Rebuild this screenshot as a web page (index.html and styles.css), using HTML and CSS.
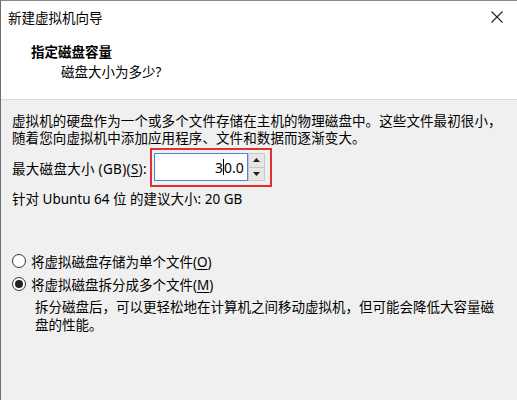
FILE: index.html
```html
<!DOCTYPE html>
<html lang="zh-CN">
<head>
<meta charset="utf-8">
<title>新建虚拟机向导</title>
<link rel="stylesheet" href="styles.css">
</head>
<body>
<div class="window">
  <div class="titlebar">
    <span class="title">新建虚拟机向导</span>
    <svg class="close" width="12" height="12" viewBox="0 0 12 12"><path d="M0.5 0.5 L11.5 11.5 M11.5 0.5 L0.5 11.5" stroke="#222" stroke-width="1.1" fill="none"/></svg>
  </div>
  <div class="header">
    <div class="heading">指定磁盘容量</div>
    <div class="subheading">磁盘大小为多少?</div>
  </div>
  <div class="content">
    <p class="para">虚拟机的硬盘作为一个或多个文件存储在主机的物理磁盘中。这些文件最初很小，<br>随着您向虚拟机中添加应用程序、文件和数据而逐渐变大。</p>
    <div class="size-row">
      <span class="label">最大磁盘大小 (GB)(<u>S</u>):</span>
      <div class="highlight">
        <div class="spin">
          <div class="spin-input"><span>3</span><span class="caret"></span><span>0.0</span></div>
          <div class="spin-btns">
            <div class="spin-btn"><svg width="7" height="4" viewBox="0 0 7 4"><path d="M0 4 L3.5 0 L7 4 Z" fill="#222"/></svg></div>
            <div class="spin-btn"><svg width="7" height="4" viewBox="0 0 7 4"><path d="M0 0 L3.5 4 L7 0 Z" fill="#222"/></svg></div>
          </div>
        </div>
      </div>
    </div>
    <p class="recommend">针对 Ubuntu 64 位 的建议大小: 20 GB</p>
    <div class="options">
      <label class="radio-row"><span class="radio"></span><span>将虚拟磁盘存储为单个文件(<u>O</u>)</span></label>
      <label class="radio-row"><span class="radio checked"></span><span>将虚拟磁盘拆分成多个文件(<u>M</u>)</span></label>
      <p class="desc">拆分磁盘后，可以更轻松地在计算机之间移动虚拟机，但可能会降低大容量磁<br>盘的性能。</p>
    </div>
  </div>
</div>
</body>
</html>
```
FILE: styles.css
```css
* { box-sizing: border-box; }
html, body {
  margin: 0;
  padding: 0;
  width: 517px;
  height: 400px;
  overflow: hidden;
  background: #f0f0f0;
  font-family: "Noto Sans", "Noto Sans CJK SC", sans-serif;
  font-size: 13.5px;
  color: #000;
}
.window {
  width: 517px;
  height: 400px;
  border-top: 1px solid #8a8a8a;
  border-left: 1px solid #6e6e6e;
  display: flex;
  flex-direction: column;
}
.titlebar {
  height: 32px;
  background: #fff;
  display: flex;
  align-items: center;
  justify-content: space-between;
  padding: 0 14px 0 7px;
}
.close { display: block; }
.header {
  background: #fff;
  height: 67px;
  padding: 9px 0 0 30px;
  border-bottom: 1px solid #dcdcdc;
}
.heading {
  font-weight: bold;
  line-height: 20px;
}
.subheading {
  line-height: 20px;
  padding-left: 30px;
}
.content {
  flex: 1;
  padding: 13px 11px 0 11px;
}
.para {
  margin: 0;
  line-height: 17px;
  letter-spacing: 0.1px;
}
.size-row {
  display: flex;
  align-items: center;
  gap: 3px;
  margin-top: 1px;
}
.label {
  letter-spacing: 0.3px;
}
.highlight {
  border: 2px solid #e03030;
  padding: 3px 5px 4px 2px;
}
.spin {
  display: flex;
  height: 28px;
}
.spin-input {
  width: 94px;
  border: 1px solid #3c8fd8;
  background: #fff;
  display: flex;
  align-items: center;
  justify-content: flex-end;
  padding-right: 3px;
  font-size: 14px;
}
.caret {
  width: 1px;
  height: 16px;
  background: #000;
}
.spin-btns {
  width: 17px;
  display: flex;
  flex-direction: column;
}
.spin-btn {
  flex: 1;
  background: #e6e6e6;
  border: 1px solid #c8c8c8;
  display: flex;
  align-items: center;
  justify-content: center;
}
.spin-btn + .spin-btn { border-top: none; }
.recommend {
  margin: 2px 0 0 0;
  line-height: 20px;
}
.options {
  margin-top: 40px;
}
.radio-row {
  display: flex;
  align-items: center;
  gap: 5px;
  height: 23px;
}
.radio {
  width: 14px;
  height: 14px;
  border: 1px solid #333;
  border-radius: 50%;
  background: #fff;
  display: flex;
  align-items: center;
  justify-content: center;
}
.radio.checked::after {
  content: "";
  width: 8px;
  height: 8px;
  border-radius: 50%;
  background: #222;
}
.desc {
  margin: 3px 0 0 23px;
  line-height: 18px;
}
u { text-decoration-thickness: 1px; text-underline-offset: 2px; }
```
